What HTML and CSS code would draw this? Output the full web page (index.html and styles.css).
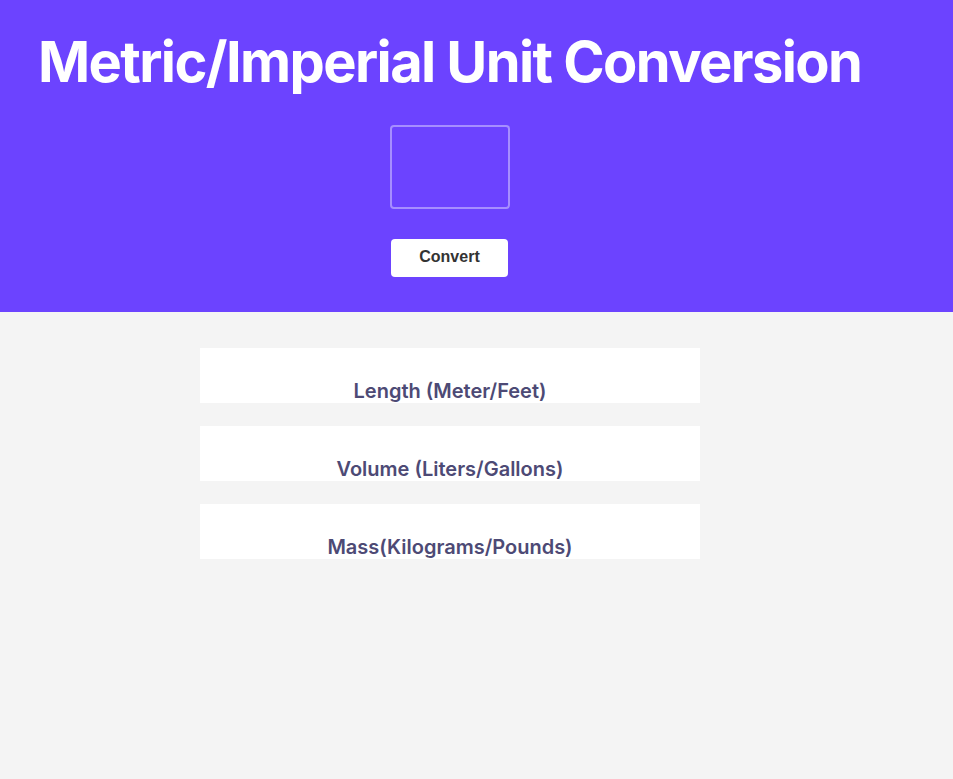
FILE: index.html
```html
<!DOCTYPE html>
<html>
<head>
<meta charset="utf-8">
<link rel="stylesheet" href="styles.css">
</head>
<body>
<header class="hero">
  <h1 class="title">Metric/Imperial Unit Conversion</h1>
  <div class="controls">
    <input class="value-input" type="text">
    <button class="convert-btn">Convert</button>
  </div>
</header>
<main class="results">
  <section class="card"><h3 class="card-title">Length (Meter/Feet)</h3></section>
  <section class="card"><h3 class="card-title">Volume (Liters/Gallons)</h3></section>
  <section class="card"><h3 class="card-title">Mass(Kilograms/Pounds)</h3></section>
</main>
</body>
</html>
```

FILE: styles.css
```css
html, body {
  margin: 0;
  padding: 0;
  background: #f4f4f4;
  height: 100%;
}
body {
  font-family: Inter, "Liberation Sans", sans-serif;
}
.hero {
  background: #6c43ff;
  height: 312px;
  box-sizing: border-box;
  padding: 28px 0 0 38px;
}
.title {
  margin: 0;
  color: #ffffff;
  font-size: 56px;
  font-weight: 700;
  letter-spacing: -1.6px;
  line-height: 68px;
  white-space: nowrap;
}
.controls {
  width: 900px;
  margin-left: -38px;
  display: flex;
  flex-direction: column;
  align-items: center;
  padding-top: 29px;
  gap: 30px;
}
.value-input {
  width: 120px;
  height: 84px;
  box-sizing: border-box;
  background: transparent;
  border: 2px solid rgba(255, 255, 255, 0.4);
  border-radius: 4px;
  outline: none;
}
.convert-btn {
  width: 117px;
  height: 38px;
  background: #ffffff;
  border: none;
  border-radius: 4px;
  font-family: "Liberation Sans", Arial, sans-serif;
  font-weight: 700;
  font-size: 16px;
  color: #333333;
  margin-left: -1px;
  padding: 0 0 2px;
}
.results {
  width: 900px;
  display: flex;
  flex-direction: column;
  align-items: center;
  padding-top: 36px;
  gap: 23px;
}
.card {
  width: 500px;
  height: 55px;
  background: #ffffff;
  overflow: hidden;
  text-align: center;
}
.card-title {
  margin: 31px 0 0;
  font-size: 20px;
  font-weight: 600;
  line-height: 24px;
  color: #4d4a75;
}
```
